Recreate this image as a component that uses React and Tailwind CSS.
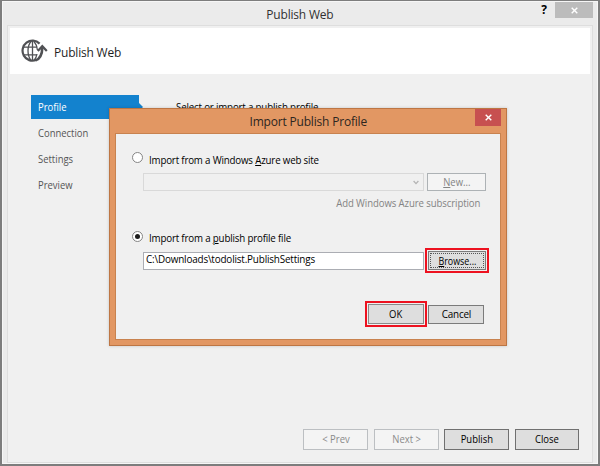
const button = 'flex items-center justify-center border shrink-0 whitespace-pre';
const narrow = 'inline-block scale-x-[0.86] whitespace-pre';

function GlobeIcon() {
  return (
    <svg width="28" height="26" viewBox="0 0 28 26" fill="none" stroke="#505154" className="shrink-0">
      <path d="M18.6 5.6A10 10 0 1 0 15.2 22" strokeWidth="2.2" />
      <path d="M2 9.2H16.5M2 16.8H16M11.5 3V23M10 3.5C6 8 6 17.6 10 22.4M13 3.5C15.2 6 16.2 8.5 16.4 12M13 22.4C14.6 20.6 15.6 18.5 16 16" strokeWidth="1.3" />
      <path d="M14.6 22.4C19.2 20.6 21.2 16.4 21.3 9.4" strokeWidth="2.6" />
      <path d="M16.8 13L21.3 8.2L25.8 13" strokeWidth="2.2" />
    </svg>
  );
}

function Cross({ size }) {
  return (
    <svg width={size} height={size} viewBox="0 0 7 7" stroke="white" strokeWidth="1.4">
      <path d="M.7 .7L6.3 6.3M6.3 .7L.7 6.3" />
    </svg>
  );
}

function Radio({ checked }) {
  return (
    <span className="flex h-[11px] w-[11px] shrink-0 items-center justify-center rounded-full border border-[#858585] bg-white">
      {checked && <span className="h-[5px] w-[5px] rounded-full bg-[#1c1c1c]" />}
    </span>
  );
}

function ImportDialog() {
  return (
    <section className="absolute left-[107px] top-[107px] flex h-[238px] w-[398px] flex-col border border-[#bd7644] bg-[#e29763] px-[5px] pb-[5px] shadow-[0_0_3px_rgba(0,0,0,0.18)]">
      <header className="relative flex h-[24px] shrink-0 items-center justify-center">
        <h2 className="scale-x-[0.887] whitespace-nowrap text-[13.5px] leading-[18px] tracking-[-0.2px] text-[#2d2620]">Import Publish Profile</h2>
        <button className="absolute right-0 top-0 flex h-[17px] w-[26px] items-center justify-center bg-[#c75050]">
          <Cross size={7} />
        </button>
      </header>
      <div className="flex flex-1 flex-col border border-[#c8824f] bg-[#f0f0f0] pl-[16px] pr-[11px] pt-[18px]">
        <label className="flex h-[14px] items-start gap-[6px]">
          <Radio />
          <span className="origin-left scale-x-[0.885] whitespace-nowrap pt-[1px] text-[11px] leading-[14px] tracking-[-0.2px]">
            Import from a Windows <u className="underline-offset-1">A</u>zure web site
          </span>
        </label>
        <div className="mt-[7px] flex gap-[3px] pl-[11px]">
          <div className="flex h-[18px] w-[281px] items-center justify-end border border-[#d9d9d9] pr-[4px]">
            <svg width="6" height="5" viewBox="0 0 6 5" fill="none" stroke="#b4b4b4" strokeWidth="1.3"><path d="M.6 1L3 3.6L5.4 1" /></svg>
          </div>
          <button className={`${button} h-[18px] w-[59px] border-[#adb2b5] bg-[#f4f4f4] text-[11px] text-[#838383]`}>
            <span className={narrow}><u className="underline-offset-1">N</u>ew...</span>
          </button>
        </div>
        <p className="mt-[5px] origin-right scale-x-[0.87] pr-[10px] text-right text-[11px] leading-[14px] tracking-[-0.1px] text-[#838383]">Add Windows Azure subscription</p>
        <label className="mt-[21px] flex h-[14px] items-start gap-[6px]">
          <Radio checked />
          <span className="origin-left scale-x-[0.887] whitespace-nowrap text-[11px] leading-[14px] tracking-[-0.2px]">
            Import from a <u className="underline-offset-1">p</u>ublish profile file
          </span>
        </label>
        <div className="mt-[3px] flex items-center pl-[11px]">
          <div className="flex h-[18px] w-[281px] items-center border border-[#abadb3] bg-white pl-[2px] text-[11px] leading-[14px] tracking-[-0.2px]">
            <span className="-mt-[3px] origin-left scale-x-[0.9]">C:\Downloads\todolist.PublishSettings</span>
          </div>
          <div className="ml-px border-2 border-[#ed1220] p-px">
            <button className={`${button} h-[19px] w-[58px] border-[#7b7b7b] bg-[#dedede] p-px text-[11px]`}>
              <span className="flex h-full w-full items-center justify-center border border-dotted border-[#555]"><span className="inline-block scale-x-[0.81] pt-px"><u className="underline-offset-1">B</u>rowse...</span></span>
            </button>
          </div>
        </div>
        <div className="mt-[28px] flex items-center justify-end gap-px pr-[5px]">
          <div className="border-2 border-[#ed1220] p-px">
            <button className={`${button} h-[20px] w-[56px] border-[#8a8a8a] bg-[#dedede] text-[11px]`}><span className={narrow}>OK</span></button>
          </div>
          <button className={`${button} h-[19px] w-[56px] border-[#7b7b7b] bg-[#dedede] text-[11px] tracking-[-0.2px]`}><span className="inline-block scale-x-[0.9]">Cancel</span></button>
        </div>
      </div>
    </section>
  );
}

export default function App() {
  return (
    <main className="relative flex h-[466px] w-[600px] flex-col border-2 border-t-1 border-[#7d7d7d] bg-[#ebebeb] px-[5px] pb-px font-['Open_Sans','Noto_Sans',sans-serif] text-black shadow-[inset_0_0_0_1px_#f6f6f6]">
      <header className="relative flex h-[24px] shrink-0 items-center justify-center">
        <h1 className="scale-x-[0.885] pt-[1px] text-[13.5px] leading-[18px] tracking-[-0.2px] text-[#303030]">Publish Web</h1>
        <div className="absolute right-0 top-0 flex items-start">
          <span className="mr-[8px] text-[12px] font-bold leading-[18px]">?</span>
          <button className="mt-px flex h-[16px] w-[38px] items-center justify-center bg-[#bcbcbc]"><Cross size={7} /></button>
        </div>
      </header>
      <div className="flex flex-1 flex-col border border-[#dedede] bg-[#f0f0f0] px-[2px] pt-[2px]">
        <div className="flex h-[46px] shrink-0 items-center bg-white pl-[11px]">
          <GlobeIcon />
          <span className="ml-[5px] origin-left scale-x-[0.885] pt-px text-[13.5px] leading-[18px] tracking-[-0.2px] text-[#1e1e1e]">Publish Web</span>
        </div>
        <div className="flex pl-[21px] pt-[21px]">
          <nav className="flex w-[112px] flex-col gap-[2px] text-[11px] text-[#555]">
            <a className="flex h-[24px] items-center bg-[#1382ce] pl-[7px] text-white [clip-path:polygon(0_0,108px_0,108px_8px,112px_12px,108px_16px,108px_24px,0_24px)]"><span className={`${narrow} origin-left`}>Profile</span></a>
            <a className="flex h-[24px] items-center pl-[7px]"><span className={`${narrow} origin-left`}>Connection</span></a>
            <a className="flex h-[24px] items-center pl-[7px]"><span className={`${narrow} origin-left`}>Settings</span></a>
            <a className="flex h-[24px] items-center pl-[7px]"><span className={`${narrow} origin-left`}>Preview</span></a>
          </nav>
          <p className="ml-[33px] origin-left scale-x-[0.885] pt-[5px] text-[11px] leading-[14px] tracking-[-0.2px]">Select or import a publish profile</p>
        </div>
        <footer className="mb-[12px] mr-[11px] mt-auto flex justify-end text-[11px]">
          <button className={`${button} h-[21px] w-[65px] border-[#bcbfc2] bg-[#f4f4f4] text-[#8a8a8a]`}><span className={narrow}>{'< Prev'}</span></button>
          <button className={`${button} ml-[6px] h-[21px] w-[65px] border-[#bcbfc2] bg-[#f4f4f4] text-[#8a8a8a]`}><span className={narrow}>{'Next >'}</span></button>
          <button className={`${button} ml-[5px] h-[21px] w-[65px] border-[#707070] bg-[#dedede]`}><span className={narrow}>Publish</span></button>
          <button className={`${button} ml-[6px] h-[21px] w-[64px] border-[#707070] bg-[#dedede]`}><span className={narrow}>Close</span></button>
        </footer>
      </div>
      <ImportDialog />
    </main>
  );
}
